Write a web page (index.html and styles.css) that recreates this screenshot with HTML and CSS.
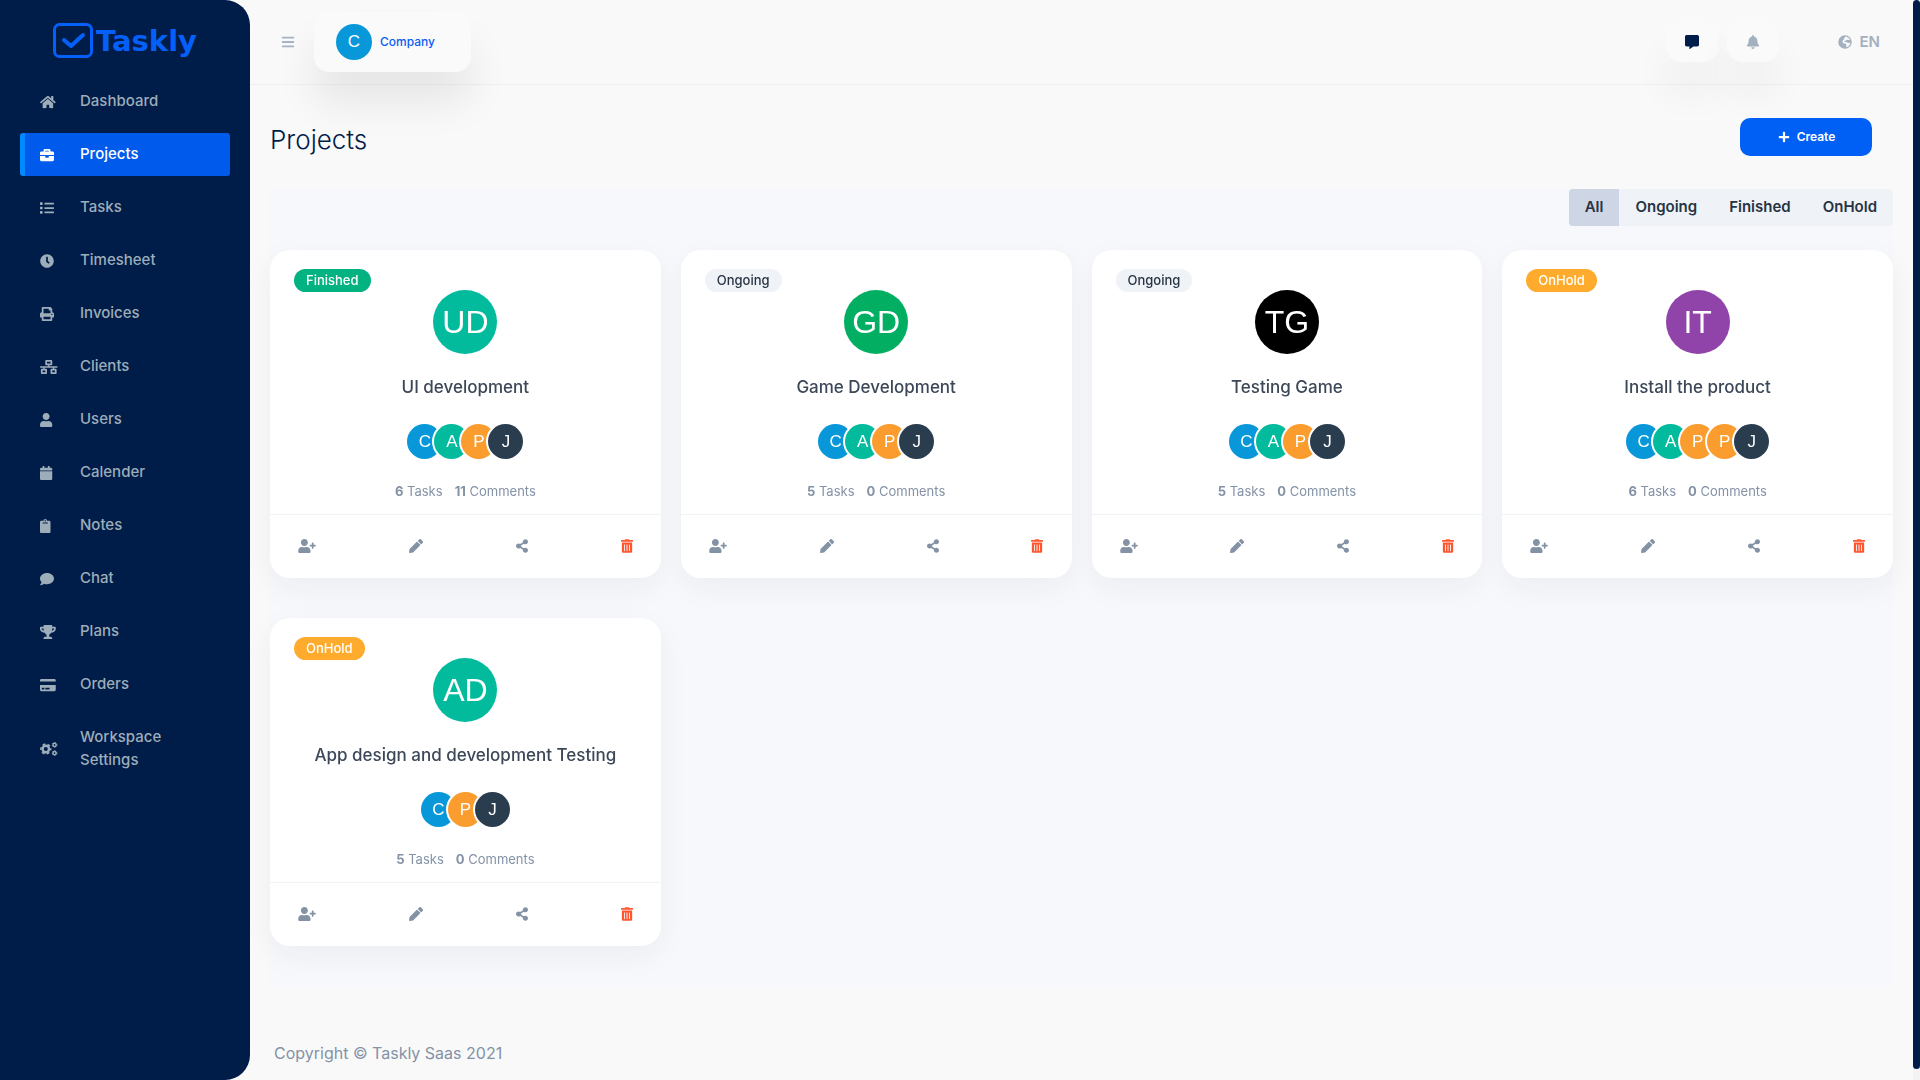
FILE: index.html
```html
<!DOCTYPE html>
<html lang="en">
<head>
    <meta charset="UTF-8">
    <meta name="viewport" content="width=device-width, initial-scale=1">
    <title>Projects - Taskly</title>
    <link rel="stylesheet" href="styles.css">
</head>
<body>

<!-- icon sprite -->
<svg class="sprite" aria-hidden="true">
    <symbol id="i-home" viewBox="0 0 576 512" preserveAspectRatio="xMinYMid"><path d="M280.37 148.26L96 300.11V464a16 16 0 0 0 16 16l112.06-.29a16 16 0 0 0 15.92-16V368a16 16 0 0 1 16-16h64a16 16 0 0 1 16 16v95.64a16 16 0 0 0 16 16.05L464 480a16 16 0 0 0 16-16V300L295.67 148.26a12.19 12.19 0 0 0-15.3 0zM571.6 251.47L488 182.56V44.05a12 12 0 0 0-12-12h-56a12 12 0 0 0-12 12v72.61L318.47 43a48 48 0 0 0-61 0L4.34 251.47a12 12 0 0 0-1.6 16.9l25.5 31A12 12 0 0 0 45.15 301l235.22-193.74a12.19 12.19 0 0 1 15.3 0L530.9 301a12 12 0 0 0 16.9-1.6l25.5-31a12 12 0 0 0-1.7-16.93z"/></symbol>
    <symbol id="i-briefcase" viewBox="0 0 512 512" preserveAspectRatio="xMinYMid"><path d="M320 336c0 8.84-7.16 16-16 16h-96c-8.84 0-16-7.16-16-16v-48H0v144c0 25.6 22.4 48 48 48h416c25.6 0 48-22.4 48-48V288H320v48zm144-208h-80V80c0-25.6-22.4-48-48-48H176c-25.6 0-48 22.4-48 48v48H48c-25.6 0-48 22.4-48 48v80h512v-80c0-25.6-22.4-48-48-48zm-144 0H192V96h128v32z"/></symbol>
    <symbol id="i-list" viewBox="0 0 512 512" preserveAspectRatio="xMinYMid"><path d="M80 368H16a16 16 0 0 0-16 16v64a16 16 0 0 0 16 16h64a16 16 0 0 0 16-16v-64a16 16 0 0 0-16-16zm0-320H16A16 16 0 0 0 0 64v64a16 16 0 0 0 16 16h64a16 16 0 0 0 16-16V64a16 16 0 0 0-16-16zm0 160H16a16 16 0 0 0-16 16v64a16 16 0 0 0 16 16h64a16 16 0 0 0 16-16v-64a16 16 0 0 0-16-16zm416 176H176a16 16 0 0 0-16 16v32a16 16 0 0 0 16 16h320a16 16 0 0 0 16-16v-32a16 16 0 0 0-16-16zm0-320H176a16 16 0 0 0-16 16v32a16 16 0 0 0 16 16h320a16 16 0 0 0 16-16V80a16 16 0 0 0-16-16zm0 160H176a16 16 0 0 0-16 16v32a16 16 0 0 0 16 16h320a16 16 0 0 0 16-16v-32a16 16 0 0 0-16-16z"/></symbol>
    <symbol id="i-clock" viewBox="0 0 512 512" preserveAspectRatio="xMinYMid"><path d="M256,8C119,8,8,119,8,256S119,504,256,504,504,393,504,256,393,8,256,8Zm92.49,313h0l-20,25a16,16,0,0,1-22.49,2.5h0l-67-49.72a40,40,0,0,1-15-31.23V112a16,16,0,0,1,16-16h32a16,16,0,0,1,16,16V256l58,42.5A16,16,0,0,1,348.49,321Z"/></symbol>
    <symbol id="i-print" viewBox="0 0 512 512" preserveAspectRatio="xMinYMid"><path d="M448 192V77.25c0-8.49-3.37-16.62-9.37-22.63L393.37 9.37c-6-6-14.14-9.37-22.63-9.37H96C78.33 0 64 14.33 64 32v160c-35.35 0-64 28.65-64 64v112c0 8.84 7.16 16 16 16h48v96c0 17.67 14.33 32 32 32h320c17.67 0 32-14.33 32-32v-96h48c8.84 0 16-7.16 16-16V256c0-35.35-28.65-64-64-64zm-64 256H128v-96h256v96zm0-224H128V64h192v48c0 8.84 7.16 16 16 16h48v96zm48 72c-13.25 0-24-10.75-24-24 0-13.26 10.75-24 24-24s24 10.74 24 24c0 13.25-10.75 24-24 24z"/></symbol>
    <symbol id="i-network" viewBox="0 0 640 512" preserveAspectRatio="xMinYMid"><path d="M640 264v-16c0-8.84-7.16-16-16-16H344v-40h72c17.67 0 32-14.33 32-32V32c0-17.67-14.33-32-32-32H224c-17.67 0-32 14.33-32 32v128c0 17.67 14.33 32 32 32h72v40H16c-8.84 0-16 7.16-16 16v16c0 8.84 7.16 16 16 16h104v40H64c-17.67 0-32 14.33-32 32v128c0 17.67 14.33 32 32 32h160c17.67 0 32-14.33 32-32V352c0-17.67-14.33-32-32-32h-56v-40h304v40h-56c-17.67 0-32 14.33-32 32v128c0 17.67 14.33 32 32 32h160c17.67 0 32-14.33 32-32V352c0-17.67-14.33-32-32-32h-56v-40h104c8.84 0 16-7.16 16-16zM256 128V64h128v64H256zm-64 320H96v-64h96v64zm352 0h-96v-64h96v64z"/></symbol>
    <symbol id="i-user" viewBox="0 0 448 512" preserveAspectRatio="xMinYMid"><path d="M224 256c70.7 0 128-57.3 128-128S294.7 0 224 0 96 57.3 96 128s57.3 128 128 128zm89.6 32h-16.7c-22.2 10.2-46.9 16-72.9 16s-50.6-5.8-72.9-16h-16.7C60.2 288 0 348.2 0 422.4V464c0 26.5 21.5 48 48 48h352c26.5 0 48-21.5 48-48v-41.6c0-74.2-60.2-134.4-134.4-134.4z"/></symbol>
    <symbol id="i-calendar" viewBox="0 0 448 512" preserveAspectRatio="xMinYMid"><path d="M12 192h424c6.6 0 12 5.4 12 12v260c0 26.5-21.5 48-48 48H48c-26.5 0-48-21.5-48-48V204c0-6.6 5.4-12 12-12zm436-44v-36c0-26.5-21.5-48-48-48h-48V12c0-6.6-5.4-12-12-12h-40c-6.6 0-12 5.4-12 12v52H160V12c0-6.6-5.4-12-12-12h-40c-6.6 0-12 5.4-12 12v52H48C21.5 64 0 85.5 0 112v36c0 6.6 5.4 12 12 12h424c6.6 0 12-5.4 12-12z"/></symbol>
    <symbol id="i-clipboard" viewBox="0 0 384 512" preserveAspectRatio="xMinYMid"><path d="M384 112v352c0 26.51-21.49 48-48 48H48c-26.51 0-48-21.49-48-48V112c0-26.51 21.49-48 48-48h80c0-35.29 28.71-64 64-64s64 28.71 64 64h80c26.51 0 48 21.49 48 48zM192 40c-13.255 0-24 10.745-24 24s10.745 24 24 24 24-10.745 24-24-10.745-24-24-24m96 114v-20a6 6 0 0 0-6-6H102a6 6 0 0 0-6 6v20a6 6 0 0 0 6 6h180a6 6 0 0 0 6-6z"/></symbol>
    <symbol id="i-comment" viewBox="0 0 512 512" preserveAspectRatio="xMinYMid"><path d="M256 32C114.6 32 0 125.1 0 240c0 49.6 21.4 95 57 130.7C44.5 421.1 2.7 466 2.2 466.5c-2.2 2.3-2.8 5.7-1.5 8.7S4.8 480 8 480c66.3 0 116-31.8 140.6-51.4 32.7 12.3 69 19.4 107.4 19.4 141.4 0 256-93.1 256-208S397.4 32 256 32z"/></symbol>
    <symbol id="i-trophy" viewBox="0 0 576 512" preserveAspectRatio="xMinYMid"><path d="M552 64H448V24c0-13.3-10.7-24-24-24H152c-13.3 0-24 10.7-24 24v40H24C10.7 64 0 74.7 0 88v56c0 35.7 22.5 72.4 61.9 100.7 31.5 22.7 69.8 37.1 110 41.7C203.3 338.5 240 360 240 360v72h-48c-35.3 0-64 20.7-64 56v12c0 6.6 5.4 12 12 12h296c6.6 0 12-5.4 12-12v-12c0-35.3-28.7-56-64-56h-48v-72s36.7-21.5 68.1-73.6c40.3-4.6 78.6-19 110-41.7 39.3-28.3 61.9-65 61.9-100.7V88c0-13.3-10.7-24-24-24zM99.3 192.8C74.9 175.2 64 155.6 64 144v-16h64.2c1 32.6 5.8 61.2 12.8 86.2-15.1-5.2-29.2-12.4-41.7-21.4zM512 144c0 16.1-17.7 36.1-35.3 48.8-12.5 9-26.7 16.2-41.8 21.4 7-25 11.8-53.6 12.8-86.2H512v16z"/></symbol>
    <symbol id="i-card" viewBox="0 0 576 512" preserveAspectRatio="xMinYMid"><path d="M0 432c0 26.5 21.5 48 48 48h480c26.5 0 48-21.5 48-48V256H0v176zm192-68c0-6.6 5.4-12 12-12h136c6.6 0 12 5.4 12 12v40c0 6.6-5.4 12-12 12H204c-6.6 0-12-5.4-12-12v-40zm-128 0c0-6.6 5.4-12 12-12h72c6.6 0 12 5.4 12 12v40c0 6.6-5.4 12-12 12H76c-6.6 0-12-5.4-12-12v-40zM576 80v48H0V80c0-26.5 21.5-48 48-48h480c26.5 0 48 21.5 48 48z"/></symbol>
    <symbol id="i-cogs" viewBox="0 0 640 512" preserveAspectRatio="xMinYMid">
        <g fill="none" stroke="currentColor">
            <circle cx="212" cy="256" r="118" stroke-width="88"/>
            <circle cx="212" cy="256" r="178" stroke-width="60" stroke-dasharray="100 86.4" stroke-dashoffset="50"/>
            <circle cx="532" cy="106" r="58" stroke-width="52"/>
            <circle cx="532" cy="106" r="86" stroke-width="32" stroke-dasharray="50 40"/>
            <circle cx="532" cy="406" r="58" stroke-width="52"/>
            <circle cx="532" cy="406" r="86" stroke-width="32" stroke-dasharray="50 40"/>
        </g>
    </symbol>
    <symbol id="i-bars" viewBox="0 0 448 512"><path d="M16 132h416c9 0 16-7 16-16V76c0-9-7-16-16-16H16C7 60 0 67 0 76v40c0 9 7 16 16 16zm0 160h416c9 0 16-7 16-16v-40c0-9-7-16-16-16H16c-9 0-16 7-16 16v40c0 9 7 16 16 16zm0 160h416c9 0 16-7 16-16v-40c0-9-7-16-16-16H16c-9 0-16 7-16 16v40c0 9 7 16 16 16z"/></symbol>
    <symbol id="i-comment-alt" viewBox="0 0 512 512"><path d="M448 0H64C28.7 0 0 28.7 0 64v288c0 35.3 28.7 64 64 64h96v84c0 9.8 11.2 15.5 19.1 9.7L304 416h144c35.3 0 64-28.7 64-64V64c0-35.3-28.7-64-64-64z"/></symbol>
    <symbol id="i-bell" viewBox="0 0 448 512"><path d="M224 512c35.32 0 63.97-28.65 63.97-64H160.03c0 35.35 28.65 64 63.97 64zm215.39-149.71c-19.32-20.76-55.47-51.99-55.47-154.29 0-77.7-54.48-139.9-127.94-155.16V32c0-17.67-14.32-32-31.98-32s-31.98 14.33-31.98 32v20.84C118.56 68.1 64.08 130.3 64.08 208c0 102.3-36.15 133.53-55.47 154.29-6 6.45-8.66 14.16-8.61 21.71.11 16.4 12.98 32 32.1 32h383.8c19.12 0 32-15.6 32.1-32 .05-7.55-2.61-15.27-8.61-21.71z"/></symbol>
    <symbol id="i-globe" viewBox="0 0 512 512"><path fill-rule="evenodd" d="M256 8a248 248 0 1 0 0 496 248 248 0 0 0 0-496zM268 52c90 6 160 66 182 138l-52-20-40 24-30-34-50 54-44 10-16 42 46-18 44 4 46 34 64 4 40-16c-8 80-62 146-136 172l-24-40 4-56-30-40-66 2-40-42 6-66 62-58-18-34 34-14z"/></symbol>
    <symbol id="i-plus" viewBox="0 0 448 512"><path d="M416 208H272V64c0-17.67-14.33-32-32-32h-32c-17.67 0-32 14.33-32 32v144H32c-17.67 0-32 14.33-32 32v32c0 17.67 14.33 32 32 32h144v144c0 17.67 14.33 32 32 32h32c17.67 0 32-14.33 32-32V304h144c17.67 0 32-14.33 32-32v-32c0-17.67-14.33-32-32-32z"/></symbol>
    <symbol id="i-user-plus" viewBox="0 0 640 512"><path d="M624 208h-64v-64c0-8.8-7.2-16-16-16h-32c-8.8 0-16 7.2-16 16v64h-64c-8.8 0-16 7.2-16 16v32c0 8.8 7.2 16 16 16h64v64c0 8.8 7.2 16 16 16h32c8.8 0 16-7.2 16-16v-64h64c8.8 0 16-7.2 16-16v-32c0-8.8-7.2-16-16-16zM224 256c70.7 0 128-57.3 128-128S294.7 0 224 0 96 57.3 96 128s57.3 128 128 128zm89.6 32h-16.7c-22.2 10.2-46.9 16-72.9 16s-50.6-5.8-72.9-16h-16.7C60.2 288 0 348.2 0 422.4V464c0 26.5 21.5 48 48 48h352c26.5 0 48-21.5 48-48v-41.6c0-74.2-60.2-134.4-134.4-134.4z"/></symbol>
    <symbol id="i-pencil" viewBox="0 0 512 512"><path d="M497.9 142.1l-46.1 46.1c-4.7 4.7-12.3 4.7-17 0l-111-111c-4.7-4.7-4.7-12.3 0-17l46.1-46.1c18.7-18.7 49.1-18.7 67.9 0l60.1 60.1c18.8 18.7 18.8 49.1 0 67.9zM284.2 99.8L21.6 362.4.4 483.9c-2.9 16.4 11.4 30.6 27.8 27.8l121.5-21.3 262.6-262.6c4.7-4.7 4.7-12.3 0-17l-111-111c-4.8-4.7-12.4-4.7-17.1 0z"/></symbol>
    <symbol id="i-share" viewBox="0 0 448 512"><path d="M352 320c-22.608 0-43.387 7.819-59.79 20.895l-102.486-64.054a96.551 96.551 0 0 0 0-41.683l102.486-64.054C308.613 184.181 329.392 192 352 192c53.019 0 96-42.981 96-96S405.019 0 352 0s-96 42.981-96 96c0 7.158.79 14.13 2.276 20.841L155.79 180.895C139.387 167.819 118.608 160 96 160c-53.019 0-96 42.981-96 96s42.981 96 96 96c22.608 0 43.387-7.819 59.79-20.895l102.486 64.054A96.301 96.301 0 0 0 256 416c0 53.019 42.981 96 96 96s96-42.981 96-96-42.981-96-96-96z"/></symbol>
    <symbol id="i-trash" viewBox="0 0 448 512"><path d="M32 464a48 48 0 0 0 48 48h288a48 48 0 0 0 48-48V128H32zm272-256a16 16 0 0 1 32 0v224a16 16 0 0 1-32 0zm-96 0a16 16 0 0 1 32 0v224a16 16 0 0 1-32 0zm-96 0a16 16 0 0 1 32 0v224a16 16 0 0 1-32 0zM432 32H312l-9.4-18.7A24 24 0 0 0 281.1 0H166.8a23.72 23.72 0 0 0-21.4 13.3L136 32H16A16 16 0 0 0 0 48v32a16 16 0 0 0 16 16h416a16 16 0 0 0 16-16V48a16 16 0 0 0-16-16z"/></symbol>
</svg>

<aside class="sidebar">
    <a href="#" class="logo">
        <svg class="logo-mark" viewBox="0 0 40 35" fill="none" stroke="currentColor" stroke-linecap="round" stroke-linejoin="round">
            <rect x="1.5" y="1.5" width="37" height="32" rx="5" stroke-width="3"/>
            <path d="M11 17l7 6L30 12" stroke-width="4"/>
        </svg>
        <span>Taskly</span>
    </a>
    <nav class="menu">
        <a href="#"><svg class="icon"><use href="#i-home"/></svg><span>Dashboard</span></a>
        <a href="#" class="active"><svg class="icon"><use href="#i-briefcase"/></svg><span>Projects</span></a>
        <a href="#"><svg class="icon"><use href="#i-list"/></svg><span>Tasks</span></a>
        <a href="#"><svg class="icon"><use href="#i-clock"/></svg><span>Timesheet</span></a>
        <a href="#"><svg class="icon"><use href="#i-print"/></svg><span>Invoices</span></a>
        <a href="#"><svg class="icon"><use href="#i-network"/></svg><span>Clients</span></a>
        <a href="#"><svg class="icon"><use href="#i-user"/></svg><span>Users</span></a>
        <a href="#"><svg class="icon"><use href="#i-calendar"/></svg><span>Calender</span></a>
        <a href="#"><svg class="icon"><use href="#i-clipboard"/></svg><span>Notes</span></a>
        <a href="#"><svg class="icon"><use href="#i-comment"/></svg><span>Chat</span></a>
        <a href="#"><svg class="icon"><use href="#i-trophy"/></svg><span>Plans</span></a>
        <a href="#"><svg class="icon"><use href="#i-card"/></svg><span>Orders</span></a>
        <a href="#"><svg class="icon"><use href="#i-cogs"/></svg><span>Workspace Settings</span></a>
    </nav>
</aside>

<div class="page">
    <header class="topbar">
        <button type="button" class="toggle" aria-label="Toggle menu"><svg class="icon"><use href="#i-bars"/></svg></button>
        <button type="button" class="company">
            <span class="avatar blue">C</span>
            <span>Company</span>
        </button>
        <div class="topbar-right">
            <a href="#" class="tool dark" aria-label="Messages"><svg class="icon"><use href="#i-comment-alt"/></svg></a>
            <a href="#" class="tool" aria-label="Notifications"><svg class="icon"><use href="#i-bell"/></svg></a>
            <a href="#" class="lang"><svg class="icon"><use href="#i-globe"/></svg><span>EN</span></a>
        </div>
    </header>

    <main class="content">
        <div class="title-row">
            <h1>Projects</h1>
            <button type="button" class="create"><svg class="icon"><use href="#i-plus"/></svg><span>Create</span></button>
        </div>

        <section class="projects">
            <div class="filters">
                <button type="button" class="active">All</button>
                <button type="button">Ongoing</button>
                <button type="button">Finished</button>
                <button type="button">OnHold</button>
            </div>

            <div class="cards">
                <article class="card">
                    <span class="badge finished">Finished</span>
                    <div class="card-body">
                        <span class="avatar large teal">UD</span>
                        <h2><a href="#">UI development</a></h2>
                        <div class="members">
                            <span class="avatar blue">C</span>
                            <span class="avatar teal">A</span>
                            <span class="avatar orange">P</span>
                            <span class="avatar navy">J</span>
                        </div>
                        <p class="stats"><span><b>6</b> Tasks</span><span><b>11</b> Comments</span></p>
                    </div>
                    <div class="card-actions">
                        <button type="button" aria-label="Invite"><svg class="icon wide"><use href="#i-user-plus"/></svg></button>
                        <button type="button" aria-label="Edit"><svg class="icon"><use href="#i-pencil"/></svg></button>
                        <button type="button" aria-label="Share"><svg class="icon narrow"><use href="#i-share"/></svg></button>
                        <button type="button" class="danger" aria-label="Delete"><svg class="icon narrow"><use href="#i-trash"/></svg></button>
                    </div>
                </article>

                <article class="card">
                    <span class="badge ongoing">Ongoing</span>
                    <div class="card-body">
                        <span class="avatar large green">GD</span>
                        <h2><a href="#">Game Development</a></h2>
                        <div class="members">
                            <span class="avatar blue">C</span>
                            <span class="avatar teal">A</span>
                            <span class="avatar orange">P</span>
                            <span class="avatar navy">J</span>
                        </div>
                        <p class="stats"><span><b>5</b> Tasks</span><span><b>0</b> Comments</span></p>
                    </div>
                    <div class="card-actions">
                        <button type="button" aria-label="Invite"><svg class="icon wide"><use href="#i-user-plus"/></svg></button>
                        <button type="button" aria-label="Edit"><svg class="icon"><use href="#i-pencil"/></svg></button>
                        <button type="button" aria-label="Share"><svg class="icon narrow"><use href="#i-share"/></svg></button>
                        <button type="button" class="danger" aria-label="Delete"><svg class="icon narrow"><use href="#i-trash"/></svg></button>
                    </div>
                </article>

                <article class="card">
                    <span class="badge ongoing">Ongoing</span>
                    <div class="card-body">
                        <span class="avatar large black">TG</span>
                        <h2><a href="#">Testing Game</a></h2>
                        <div class="members">
                            <span class="avatar blue">C</span>
                            <span class="avatar teal">A</span>
                            <span class="avatar orange">P</span>
                            <span class="avatar navy">J</span>
                        </div>
                        <p class="stats"><span><b>5</b> Tasks</span><span><b>0</b> Comments</span></p>
                    </div>
                    <div class="card-actions">
                        <button type="button" aria-label="Invite"><svg class="icon wide"><use href="#i-user-plus"/></svg></button>
                        <button type="button" aria-label="Edit"><svg class="icon"><use href="#i-pencil"/></svg></button>
                        <button type="button" aria-label="Share"><svg class="icon narrow"><use href="#i-share"/></svg></button>
                        <button type="button" class="danger" aria-label="Delete"><svg class="icon narrow"><use href="#i-trash"/></svg></button>
                    </div>
                </article>

                <article class="card">
                    <span class="badge onhold">OnHold</span>
                    <div class="card-body">
                        <span class="avatar large purple">IT</span>
                        <h2><a href="#">Install the product</a></h2>
                        <div class="members">
                            <span class="avatar blue">C</span>
                            <span class="avatar teal">A</span>
                            <span class="avatar orange">P</span>
                            <span class="avatar orange">P</span>
                            <span class="avatar navy">J</span>
                        </div>
                        <p class="stats"><span><b>6</b> Tasks</span><span><b>0</b> Comments</span></p>
                    </div>
                    <div class="card-actions">
                        <button type="button" aria-label="Invite"><svg class="icon wide"><use href="#i-user-plus"/></svg></button>
                        <button type="button" aria-label="Edit"><svg class="icon"><use href="#i-pencil"/></svg></button>
                        <button type="button" aria-label="Share"><svg class="icon narrow"><use href="#i-share"/></svg></button>
                        <button type="button" class="danger" aria-label="Delete"><svg class="icon narrow"><use href="#i-trash"/></svg></button>
                    </div>
                </article>

                <article class="card">
                    <span class="badge onhold">OnHold</span>
                    <div class="card-body">
                        <span class="avatar large teal">AD</span>
                        <h2><a href="#">App design and development Testing</a></h2>
                        <div class="members">
                            <span class="avatar blue">C</span>
                            <span class="avatar orange">P</span>
                            <span class="avatar navy">J</span>
                        </div>
                        <p class="stats"><span><b>5</b> Tasks</span><span><b>0</b> Comments</span></p>
                    </div>
                    <div class="card-actions">
                        <button type="button" aria-label="Invite"><svg class="icon wide"><use href="#i-user-plus"/></svg></button>
                        <button type="button" aria-label="Edit"><svg class="icon"><use href="#i-pencil"/></svg></button>
                        <button type="button" aria-label="Share"><svg class="icon narrow"><use href="#i-share"/></svg></button>
                        <button type="button" class="danger" aria-label="Delete"><svg class="icon narrow"><use href="#i-trash"/></svg></button>
                    </div>
                </article>
            </div>
        </section>
    </main>

    <footer class="footer">Copyright © Taskly Saas 2021</footer>
</div>

<div class="scrollbar"><div class="scrollbar-thumb"></div></div>

</body>
</html>
```
FILE: styles.css
```css
* {
    box-sizing: border-box;
    margin: 0;
    padding: 0;
}

body {
    background: #f9f9f9;
    color: #8492a6;
    font-family: Inter, "Open Sans", sans-serif;
    font-size: 16px;
    line-height: 24px;
}

a {
    color: inherit;
    text-decoration: none;
}

button {
    border: 0;
    background: none;
    color: inherit;
    font: inherit;
    cursor: pointer;
}

.sprite {
    display: none;
}

.icon {
    display: block;
    width: 14px;
    height: 14px;
    fill: currentColor;
}

.icon.wide {
    width: 18px;
}

.icon.narrow {
    width: 12px;
}

/* sidebar */
.sidebar {
    position: fixed;
    top: 0;
    bottom: 0;
    left: 0;
    width: 250px;
    padding: 23px 20px 0;
    border-radius: 0 25px 25px 0;
    background: #001c48;
}

.logo {
    display: flex;
    justify-content: center;
    gap: 3px;
    height: 57px;
    color: #0460f8;
    font-family: "DejaVu Sans", sans-serif;
    font-size: 29px;
    font-weight: 700;
    line-height: 36px;
}

.logo-mark {
    flex: none;
    width: 40px;
    height: 35px;
}

.menu a {
    display: flex;
    align-items: center;
    gap: 20px;
    margin-bottom: 10px;
    padding: 9px 15px 11px;
    border-left: 5px solid transparent;
    border-radius: 3px;
    color: #9dadb9;
    font-size: 15px;
    font-weight: 500;
    line-height: 23px;
}

.menu a.active {
    border-left-color: #008aff;
    background: #005aeb;
    color: #fff;
}

.menu .icon {
    flex: none;
    width: 20px;
    margin-top: 2px;
}

/* top bar */
.page {
    margin-left: 250px;
    padding-right: 7px;
}

.topbar {
    display: flex;
    align-items: center;
    height: 85px;
    padding: 0 33px 0 31px;
    border-bottom: 1px solid #eee;
}

.toggle {
    margin-right: 19px;
    color: #a5b3c5;
}

.company {
    display: flex;
    align-items: center;
    gap: 8px;
    width: 157px;
    height: 60px;
    padding-left: 22px;
    border-radius: 15px;
    background: #fafafa;
    box-shadow: 0 30px 40px rgba(0, 0, 0, .08);
    color: #0a5cf5;
    font-size: 12px;
    font-weight: 500;
}

.topbar-right {
    display: flex;
    align-items: center;
    gap: 9px;
    margin-left: auto;
    color: #a2b0bf;
}

.tool {
    display: flex;
    align-items: center;
    justify-content: center;
    width: 52px;
    height: 40px;
    border-radius: 15px;
    background: #fafafa;
    box-shadow: 0 30px 40px rgba(0, 0, 0, .05);
}

.tool.dark {
    color: #001c48;
}

.lang {
    display: flex;
    align-items: center;
    gap: 8px;
    margin-left: 50px;
    font-size: 15px;
    font-weight: 600;
}

/* avatars */
.avatar {
    display: flex;
    align-items: center;
    justify-content: center;
    width: 36px;
    height: 36px;
    border-radius: 50%;
    color: #fff;
    font-family: "Liberation Sans", Arial, sans-serif;
    font-size: 17px;
    font-weight: 400;
}

.avatar.large {
    width: 64px;
    height: 64px;
    font-size: 32px;
}

.blue { background: #0898da; }
.teal { background: #02bb9d; }
.green { background: #02af62; }
.orange { background: #fb9c2f; }
.navy { background: #2a3d4f; }
.purple { background: #9043a9; }
.black { background: #000; }

/* content */
.content {
    padding: 33px 20px 0;
}

.title-row {
    display: flex;
    align-items: flex-start;
    justify-content: space-between;
    height: 71px;
    padding-right: 21px;
}

h1 {
    margin-top: 6px;
    color: #001c48;
    font-size: 26px;
    font-weight: 300;
    line-height: 32px;
}

.create {
    display: flex;
    align-items: center;
    justify-content: center;
    gap: 6px;
    width: 132px;
    height: 38px;
    border-radius: 10px;
    background: #005ff5;
    color: #fff;
    font-size: 12px;
    font-weight: 600;
}

.create .icon {
    height: 12px;
}

.projects {
    padding-bottom: 40px;
    background: #f7f8fb;
}

.filters {
    display: flex;
    width: max-content;
    margin: 0 0 24px auto;
    overflow: hidden;
    border-radius: 4px;
    background: #eff2f7;
    color: #273444;
}

.filters button {
    height: 37px;
    padding: 0 16px 2px;
    font-size: 15px;
    font-weight: 600;
}

.filters .active {
    background: #ced6e5;
}

.cards {
    display: grid;
    grid-template-columns: repeat(auto-fill, minmax(340px, 1fr));
    gap: 40px 20px;
}

.card {
    position: relative;
    border-radius: 20px;
    background: #fff;
    box-shadow: 0 10px 30px rgba(31, 45, 61, .05);
}

.badge {
    position: absolute;
    top: 19px;
    left: 24px;
    padding: 0 12px;
    border-radius: 12px;
    font-size: 13px;
    font-weight: 500;
    line-height: 23px;
}

.badge.finished {
    background: #02b381;
    color: #fff;
}

.badge.ongoing {
    background: #eff2f7;
    color: #273444;
}

.badge.onhold {
    background: #ffab2e;
    color: #fff;
}

.card-body {
    display: flex;
    flex-direction: column;
    align-items: center;
    padding: 40px 24px 13px;
    border-bottom: 1px solid #eff2f7;
}

.card h2 {
    margin: 21px 0 25px;
    color: #3c4858;
    font-size: 17px;
    font-weight: 500;
    line-height: 24px;
}

.members {
    display: flex;
    margin-bottom: 22px;
}

.members .avatar {
    width: 35px;
    height: 35px;
    box-shadow: 0 0 0 2px #fff;
}

.members .avatar + .avatar {
    margin-left: -8px;
}

.stats {
    display: flex;
    gap: 12px;
    font-size: 13px;
    line-height: 20px;
}

.card-actions {
    display: flex;
    justify-content: space-between;
    padding: 24px 28px 25px;
}

.card-actions .danger {
    color: #ff5630;
}

.footer {
    padding: 55px 24px 15px;
}

/* page scrollbar */
.scrollbar {
    position: fixed;
    top: 0;
    right: 0;
    bottom: 0;
    width: 7px;
    background: #f3f3f3;
}

.scrollbar-thumb {
    height: 99%;
    border-radius: 4px;
    background: #001c48;
}
```
